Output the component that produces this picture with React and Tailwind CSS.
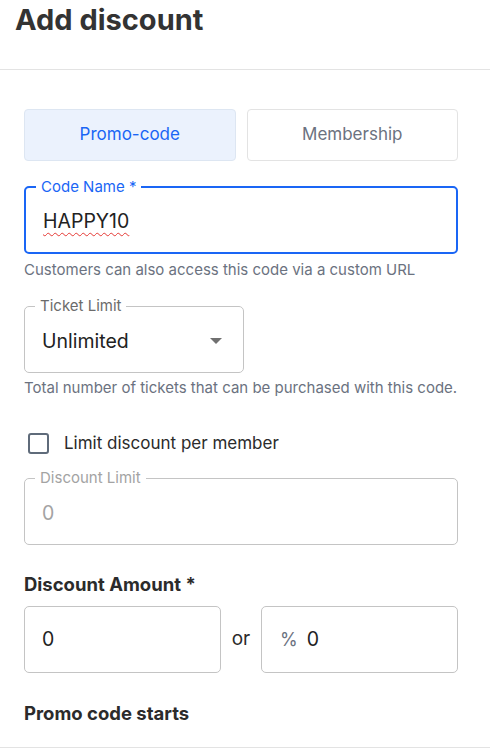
import { useState } from 'react';

const OutlinedField = ({ label, children, className = '', focused, disabled }) => (
  <fieldset
    className={`h-[74px] rounded-[5px] px-[17px] ${
      focused ? 'border-2 border-[#1a66f5]' : 'border border-[#c4c4c4]'
    } ${className}`}
  >
    <legend
      className={`ml-[-7px] px-[5px] text-[15px] leading-[14px] ${
        focused ? 'text-[#1a66f5]' : disabled ? 'text-[#a3a3a3]' : 'text-[#6b6b6b]'
      }`}
    >
      {label}
    </legend>
    {children}
  </fieldset>
);

export default function App() {
  const [tab, setTab] = useState('promo');

  return (
    <div className="w-[490px] h-[750px] overflow-hidden bg-white font-['Inter','Noto_Sans',sans-serif] text-[#2b2b2b]">
      {/* Header */}
      <div className="h-[70px] border-b border-[#e3e3e3] px-[15px] pt-[2px]">
        <h1 className="text-[29px] font-bold leading-[36px] text-[#333]">Add discount</h1>
      </div>

      <div className="px-[24px] pt-[39px] pr-[32px]">
        {/* Tabs */}
        <div className="grid grid-cols-2 gap-[11px]">
          <button
            onClick={() => setTab('promo')}
            className={`h-[52px] rounded-[4px] border text-[17px] ${
              tab === 'promo'
                ? 'bg-[#ebf2fd] border-[#dde6f2] text-[#1a66f5]'
                : 'bg-white border-[#e3e3e3] text-[#6b7280]'
            }`}
          >
            Promo-code
          </button>
          <button
            onClick={() => setTab('member')}
            className={`h-[52px] rounded-[4px] border text-[17px] ${
              tab === 'member'
                ? 'bg-[#ebf2fd] border-[#dde6f2] text-[#1a66f5]'
                : 'bg-white border-[#e3e3e3] text-[#6b7280]'
            }`}
          >
            Membership
          </button>
        </div>

        {/* Code name */}
        <OutlinedField label="Code Name *" focused className="mt-[19px]">
          <div className="pt-[15px] text-[19.5px] leading-[24px] text-[#222] underline decoration-wavy decoration-[#e53935] decoration-[1px] underline-offset-[4px] w-fit">
            HAPPY10
          </div>
        </OutlinedField>
        <p className="mt-[6px] text-[15px] leading-[20px] text-[#6b7280]">
          Customers can also access this code via a custom URL
        </p>

        {/* Ticket limit */}
        <OutlinedField label="Ticket Limit" className="mt-[19px] w-[220px]">
          <div className="flex items-center justify-between pt-[16px] pr-[2px]">
            <span className="text-[19.5px] leading-[24px] text-[#222]">Unlimited</span>
            <svg width="14" height="8" viewBox="0 0 14 8" className="mr-[1px]">
              <path d="M1 1h12L7 7z" fill="#707070" />
            </svg>
          </div>
        </OutlinedField>
        <p className="mt-[5px] text-[15px] leading-[20px] text-[#6b7280] whitespace-nowrap">
          Total number of tickets that can be purchased with this code.
        </p>

        {/* Checkbox */}
        <label className="mt-[35px] flex items-center gap-[15px] pl-[4px]">
          <span className="h-[21px] w-[21px] rounded-[3px] border-2 border-[#5f6b7a]" />
          <span className="text-[17px] leading-[21px] text-[#2b2b2b]">Limit discount per member</span>
        </label>

        {/* Discount limit */}
        <OutlinedField label="Discount Limit" disabled className="mt-[17px]">
          <div className="pt-[16px] text-[19.5px] leading-[24px] text-[#a3a3a3]">0</div>
        </OutlinedField>

        {/* Discount amount */}
        <h2 className="mt-[27px] text-[18.5px] font-bold leading-[24px] text-[#2b2b2b]">Discount Amount *</h2>
        <div className="mt-[10px] flex items-center">
          <div className="flex h-[67px] w-[197px] items-center rounded-[5px] border border-[#c4c4c4] px-[17px] text-[19.5px] text-[#222]">
            0
          </div>
          <span className="w-[40px] text-center text-[19px] text-[#2b2b2b]">or</span>
          <div className="flex h-[67px] flex-1 items-center gap-[9px] rounded-[5px] border border-[#c4c4c4] px-[18px] text-[19.5px]">
            <span className="text-[18px] text-[#6b7280]">%</span>
            <span className="text-[#222]">0</span>
          </div>
        </div>

        <h2 className="mt-[28px] text-[18.5px] font-bold leading-[24px] text-[#2b2b2b]">Promo code starts</h2>
      </div>
      <div className="mt-[22px] border-b border-[#e3e3e3]" />
    </div>
  );
}
